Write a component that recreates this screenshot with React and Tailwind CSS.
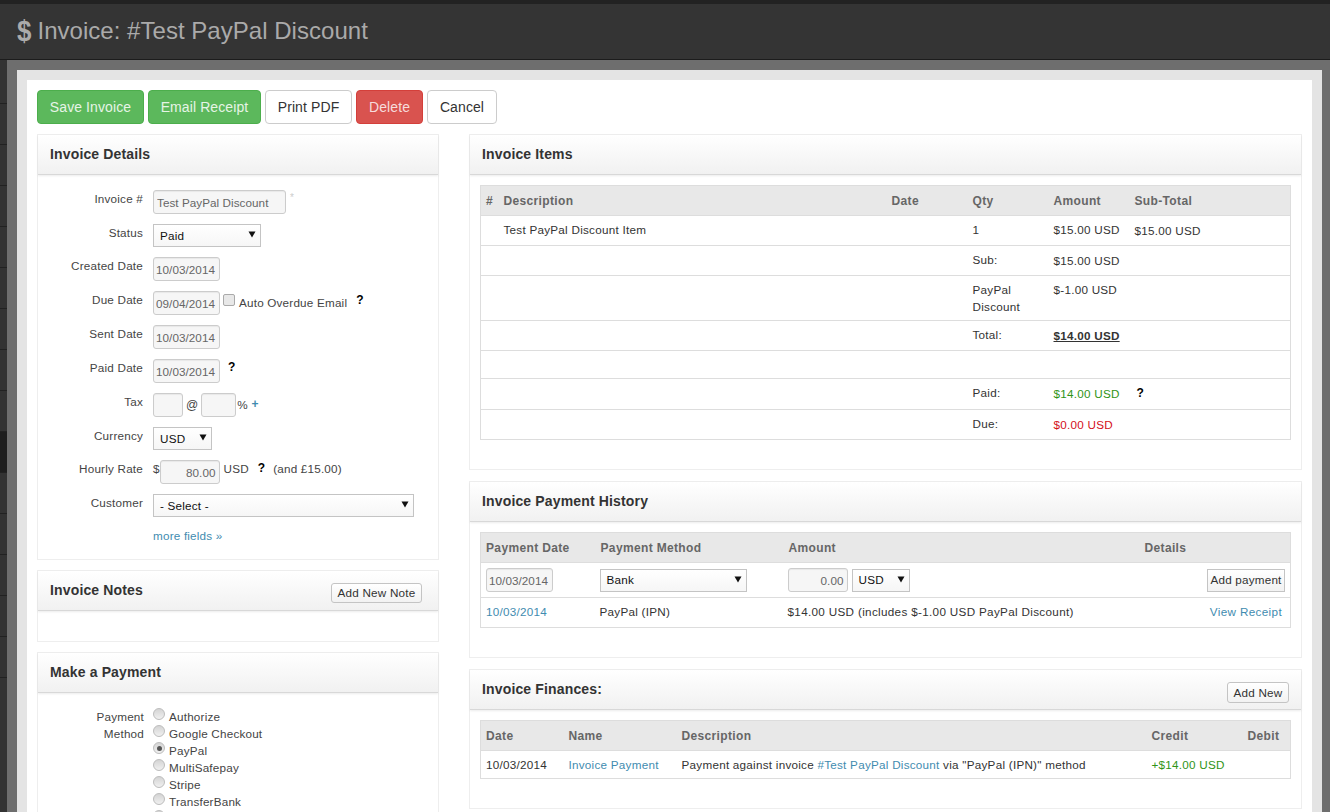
import React from "react";

const railRows = Array.from({ length: 15 }, (_, i) => i);

function Btn({ children, className }) {
  return (
    <button className={`h-[34px] rounded-[4px] border text-[14px] tracking-[0.1px] ${className}`}>
      {children}
    </button>
  );
}

function SmallBtn({ children, className }) {
  return (
    <button className={`rounded-[3px] border border-[#c4c4c4] bg-gradient-to-b from-white to-[#f2f2f2] text-[11.7px] tracking-[0.2px] text-[#333] ${className}`}>
      {children}
    </button>
  );
}

function Panel({ title, action, className, headerClass, children }) {
  return (
    <div className={`border border-[#eeeeee] bg-white ${className}`}>
      <div className={`flex h-[40px] items-center justify-between border-b border-[#d8d8d8] bg-gradient-to-b from-white to-[#f1f1f1] pl-[12px] shadow-[0_1px_2px_rgba(0,0,0,0.08)] ${headerClass}`}>
        <div className="text-[14px] font-bold tracking-[0.15px] text-[#333]">{title}</div>
        {action}
      </div>
      {children}
    </div>
  );
}

function Row({ label, className, children }) {
  return (
    <div className={`flex items-start ${className || "h-[34px]"}`}>
      <div className="w-[105px] text-right text-[11.7px] leading-[17px] tracking-[0.2px] text-[#444]">{label}</div>
      <div className="ml-[10px] flex items-start">{children}</div>
    </div>
  );
}

function TextInput({ value, className }) {
  return (
    <input
      readOnly
      value={value || ""}
      className={`h-[24px] rounded-[3px] border border-[#cccccc] bg-[#f6f6f6] text-[11.7px] tracking-[0.05px] text-[#666] shadow-[inset_0_1px_1px_rgba(0,0,0,0.06)] outline-none ${className}`}
    />
  );
}

function Select({ value, className }) {
  return (
    <div className={`flex h-[23px] items-center justify-between border border-[#c4c4c4] bg-gradient-to-b from-white to-[#f6f6f6] pl-[6px] pr-[4px] text-[11.7px] tracking-[0.2px] text-[#111] ${className}`}>
      <span>{value}</span>
      <svg width="8" height="7" viewBox="0 0 8 7" className="mb-[2px]">
        <path d="M0.5 0.5h7L4 6.5z" fill="#111" />
      </svg>
    </div>
  );
}

function Help({ className }) {
  return <span className={`text-[12px] font-bold leading-[14px] text-black ${className}`}>?</span>;
}

function Radio({ checked }) {
  return (
    <span className="flex h-[12px] w-[12px] items-center justify-center rounded-full border border-[#bcbcbc] bg-gradient-to-b from-[#d4d4d4] to-[#f0f0f0]">
      {checked && <span className="h-[5px] w-[5px] rounded-full bg-[#555]" />}
    </span>
  );
}

function Th({ children, className }) {
  return <th className={`h-[30px] pl-[5px] pr-[6px] text-left text-[12px] font-bold tracking-[0.35px] text-[#666] ${className || ""}`}>{children}</th>;
}

function Td({ children, className }) {
  return <td className={`pl-[5px] pr-[6px] pt-[5px] align-top leading-[17px] ${className || ""}`}>{children}</td>;
}

const A = ({ children }) => <span className="text-[#3f8cb0]">{children}</span>;

// the last radio sits on the fold, its label is below the picture
const methods = ["Authorize", "Google Checkout", "PayPal", "MultiSafepay", "Stripe", "TransferBank", ""];

export default function App() {
  return (
    <div className="flex h-[812px] flex-col overflow-hidden bg-[#333] font-['Liberation_Sans',Arial,sans-serif]">
      <div className="h-[60px] shrink-0 border-t-[4px] border-b border-[#222] border-b-[#1c1c1c] bg-[#343434]">
        <div className="flex h-full items-center pb-[2px] pl-[17px] text-[#aaaaaa]">
          <span className="mr-[6px] scale-y-[1.15] text-[26px] font-bold leading-none">$</span>
          <span className="text-[24px] tracking-[0.03px]">Invoice: #Test PayPal Discount</span>
        </div>
      </div>
      <div className="flex min-h-0 flex-1">
        <div className="w-[7px] shrink-0 bg-[#333] pt-[3px]">
          {railRows.map((i) => (
            <div key={i} className={`h-[41px] border-b border-[#222] ${i === 9 ? "bg-[#1e1e1e]" : "bg-[#333]"}`} />
          ))}
        </div>
        <div className="min-w-0 flex-1 bg-[#6e6e6e] pb-0 pl-[10px] pr-[8px] pt-[10px]">
          <div className="h-[800px] bg-[#e4e4e4] p-[10px]">
            <div className="h-[790px] bg-white px-[10px] pt-[10px]">
              <div className="flex gap-[4px]">
                <Btn className="w-[107px] border-[#4cae4c] bg-[#5cb85c] text-[#e6f4e6]">Save Invoice</Btn>
                <Btn className="w-[113px] border-[#4cae4c] bg-[#5cb85c] text-[#e6f4e6]">Email Receipt</Btn>
                <Btn className="w-[87px] border-[#cccccc] bg-white text-[#333]">Print PDF</Btn>
                <Btn className="w-[67px] border-[#d43f3a] bg-[#d9534f] text-[#f6dcdc]">Delete</Btn>
                <Btn className="w-[70px] border-[#cccccc] bg-white text-[#333]">Cancel</Btn>
              </div>

              <div className="mt-[10px] flex gap-[30px]">
                {/* left column */}
                <div className="flex w-[402px] shrink-0 flex-col gap-[10px]">
                  <Panel title="Invoice Details" className="h-[426px]">
                    <div className="pt-[15px]">
                      <Row label="Invoice #">
                        <TextInput value="Test PayPal Discount" className="w-[133px] pl-[3px] tracking-[0.2px]" />
                        <span className="ml-[4px] text-[10px] text-[#ccc]">*</span>
                      </Row>
                      <Row label="Status" className="h-[33px]">
                        <Select value="Paid" className="w-[108px]" />
                      </Row>
                      <Row label="Created Date">
                        <TextInput value="10/03/2014" className="w-[67px] pl-[2px]" />
                      </Row>
                      <Row label="Due Date">
                        <TextInput value="09/04/2014" className="w-[67px] pl-[2px]" />
                        <span className="ml-[3px] mt-[3px] h-[12px] w-[12px] rounded-[2px] border border-[#aaa] bg-[#e8e8e8]" />
                        <span className="ml-[4px] mt-[3px] text-[11.7px] leading-[17px] tracking-[0.2px] text-[#444]">Auto Overdue Email</span>
                        <Help className="ml-[9px] mt-[2px]" />
                      </Row>
                      <Row label="Sent Date">
                        <TextInput value="10/03/2014" className="w-[67px] pl-[2px]" />
                      </Row>
                      <Row label="Paid Date">
                        <TextInput value="10/03/2014" className="w-[67px] pl-[2px]" />
                        <Help className="ml-[8px] mt-[1px]" />
                      </Row>
                      <Row label="Tax">
                        <TextInput className="w-[30px]" />
                        <span className="mx-[3px] mt-[4px] text-[12px] leading-[17px] text-[#444]">@</span>
                        <TextInput className="w-[35px]" />
                        <span className="ml-[1px] mt-[3px] text-[11.7px] leading-[17px] text-[#444]">%</span>
                        <span className="ml-[4px] mt-[3px] text-[12px] font-bold leading-[17px] text-[#3f8cb0]">+</span>
                      </Row>
                      <Row label="Currency" className="h-[33px]">
                        <Select value="USD" className="w-[59px]" />
                      </Row>
                      <Row label="Hourly Rate">
                        <span className="text-[11.7px] leading-[17px] text-[#444]">$</span>
                        <TextInput value="80.00" className="w-[60px] pr-[3px] text-right" />
                        <span className="ml-[4px] text-[11.7px] leading-[17px] tracking-[0.2px] text-[#444]">USD</span>
                        <Help className="ml-[9px] mt-[1px]" />
                        <span className="ml-[8px] text-[11.7px] leading-[17px] tracking-[0.2px] text-[#444]">(and £15.00)</span>
                      </Row>
                      <Row label="Customer">
                        <Select value="- Select -" className="w-[261px]" />
                      </Row>
                      <div className="-mt-[1px] pl-[115px] text-[11.7px] leading-[17px] tracking-[0.2px] text-[#3f8cb0]">more fields »</div>
                    </div>
                  </Panel>

                  <Panel
                    title="Invoice Notes"
                    className="h-[72px]"
                    headerClass="pr-[16px]"
                    action={<SmallBtn className="mt-[4px] h-[20px] w-[91px]">Add New Note</SmallBtn>}
                  />

                  <Panel title="Make a Payment" className="h-[300px]">
                    <div className="flex pt-[15px]">
                      <div className="w-[106px] text-right text-[11.7px] leading-[17px] tracking-[0.2px] text-[#444]">
                        Payment
                        <br />
                        Method
                      </div>
                      <div className="ml-[9px]">
                        {methods.map((m, i) => (
                          <div key={i} className="flex h-[17px] items-start">
                            <Radio checked={i === 2} />
                            {m && <span className="ml-[4px] text-[11.7px] leading-[17px] tracking-[0.2px] text-[#444]">{m}</span>}
                          </div>
                        ))}
                      </div>
                    </div>
                  </Panel>
                </div>

                {/* right column */}
                <div className="flex w-[833px] shrink-0 flex-col gap-[11px]">
                  <Panel title="Invoice Items" className="h-[336px]">
                    <div className="px-[10px] pt-[10px]">
                      <table className="w-[811px] table-fixed border border-[#dddddd] text-[11.7px] tracking-[0.25px] text-[#333]">
                        <colgroup>
                          <col className="w-[18px]" />
                          <col className="w-[388px]" />
                          <col className="w-[81px]" />
                          <col className="w-[81px]" />
                          <col className="w-[81px]" />
                          <col />
                        </colgroup>
                        <thead>
                          <tr className="bg-[#e8e8e8]">
                            <Th className="!pr-0">#</Th>
                            <Th>Description</Th>
                            <Th>Date</Th>
                            <Th>Qty</Th>
                            <Th>Amount</Th>
                            <Th>Sub-Total</Th>
                          </tr>
                        </thead>
                        <tbody>
                          <tr className="h-[30px] border-t border-[#dddddd]">
                            <Td />
                            <Td>Test PayPal Discount Item</Td>
                            <Td />
                            <Td>1</Td>
                            <Td className="whitespace-nowrap">$15.00 USD</Td>
                            <Td className="whitespace-nowrap !pt-[6px]">$15.00 USD</Td>
                          </tr>
                          <tr className="h-[30px] border-t border-[#dddddd]">
                            <td colSpan={3} />
                            <Td>Sub:</Td>
                            <Td className="whitespace-nowrap !pt-[6px]">$15.00 USD</Td>
                            <Td />
                          </tr>
                          <tr className="h-[45px] border-t border-[#dddddd]">
                            <td colSpan={3} />
                            <Td>PayPal Discount</Td>
                            <Td className="whitespace-nowrap">$-1.00 USD</Td>
                            <Td />
                          </tr>
                          <tr className="h-[30px] border-t border-[#dddddd]">
                            <td colSpan={3} />
                            <Td>Total:</Td>
                            <Td className="whitespace-nowrap !pt-[6px] font-bold underline">$14.00 USD</Td>
                            <Td />
                          </tr>
                          <tr className="h-[28px] border-t border-[#dddddd]">
                            <td colSpan={6} />
                          </tr>
                          <tr className="h-[31px] border-t border-[#dddddd]">
                            <td colSpan={3} />
                            <Td>Paid:</Td>
                            <Td className="whitespace-nowrap !pt-[6px] text-[#2f9417]">$14.00 USD</Td>
                            <Td><Help className="ml-[2px]" /></Td>
                          </tr>
                          <tr className="h-[30px] border-t border-[#dddddd]">
                            <td colSpan={3} />
                            <Td>Due:</Td>
                            <Td className="whitespace-nowrap !pt-[6px] text-[#d4101a]">$0.00 USD</Td>
                            <Td />
                          </tr>
                        </tbody>
                      </table>
                    </div>
                  </Panel>

                  <Panel title="Invoice Payment History" className="h-[177px]">
                    <div className="px-[10px] pt-[10px]">
                      <table className="w-[811px] table-fixed border border-[#dddddd] text-[11.7px] tracking-[0.25px] text-[#333]">
                        <colgroup>
                          <col className="w-[115px]" />
                          <col className="w-[188px]" />
                          <col className="w-[356px]" />
                          <col />
                        </colgroup>
                        <thead>
                          <tr className="bg-[#e8e8e8]">
                            <Th>Payment Date</Th>
                            <Th>Payment Method</Th>
                            <Th>Amount</Th>
                            <Th>Details</Th>
                          </tr>
                        </thead>
                        <tbody>
                          <tr className="h-[35px] border-t border-[#dddddd]">
                            <td className="pl-[5px] pr-[6px]"><TextInput value="10/03/2014" className="block w-[67px] pl-[2px]" /></td>
                            <td className="pl-[4px] pr-[6px]"><Select value="Bank" className="w-[147px]" /></td>
                            <td className="pl-[4px] pr-[6px]">
                              <div className="flex items-center gap-[4px]">
                                <TextInput value="0.00" className="w-[60px] pr-[3px] text-right" />
                                <Select value="USD" className="w-[58px]" />
                              </div>
                            </td>
                            <td className="px-[5px] text-right">
                              <SmallBtn className="h-[23px] w-[78px] !rounded-none">Add payment</SmallBtn>
                            </td>
                          </tr>
                          <tr className="h-[30px] border-t border-[#dddddd]">
                            <Td><A>10/03/2014</A></Td>
                            <Td className="!pl-[4px]">PayPal (IPN)</Td>
                            <Td className="whitespace-nowrap !pl-[4px] tracking-[0.32px]">$14.00 USD (includes $-1.00 USD PayPal Discount)</Td>
                            <Td className="!pr-[8px] text-right tracking-[0.35px]"><A>View Receipt</A></Td>
                          </tr>
                        </tbody>
                      </table>
                    </div>
                  </Panel>

                  <Panel
                    title="Invoice Finances:"
                    className="h-[140px]"
                    headerClass="pr-[12px]"
                    action={<SmallBtn className="mt-[6px] h-[21px] w-[62px]">Add New</SmallBtn>}
                  >
                    <div className="px-[10px] pt-[10px]">
                      <table className="w-[811px] table-fixed border border-[#dddddd] text-[11.7px] tracking-[0.25px] text-[#333]">
                        <colgroup>
                          <col className="w-[83px]" />
                          <col className="w-[113px]" />
                          <col className="w-[470px]" />
                          <col className="w-[96px]" />
                          <col />
                        </colgroup>
                        <thead>
                          <tr className="bg-[#e8e8e8]">
                            <Th>Date</Th>
                            <Th>Name</Th>
                            <Th>Description</Th>
                            <Th>Credit</Th>
                            <Th>Debit</Th>
                          </tr>
                        </thead>
                        <tbody>
                          <tr className="h-[28px] border-t border-[#dddddd]">
                            <Td>10/03/2014</Td>
                            <Td className="whitespace-nowrap"><A>Invoice Payment</A></Td>
                            <Td className="whitespace-nowrap">
                              Payment against invoice <A>#Test PayPal Discount</A> via "PayPal (IPN)" method
                            </Td>
                            <Td className="whitespace-nowrap text-[#2f9417]">+$14.00 USD</Td>
                            <Td />
                          </tr>
                        </tbody>
                      </table>
                    </div>
                  </Panel>
                </div>
              </div>
            </div>
          </div>
        </div>
      </div>
    </div>
  );
}
